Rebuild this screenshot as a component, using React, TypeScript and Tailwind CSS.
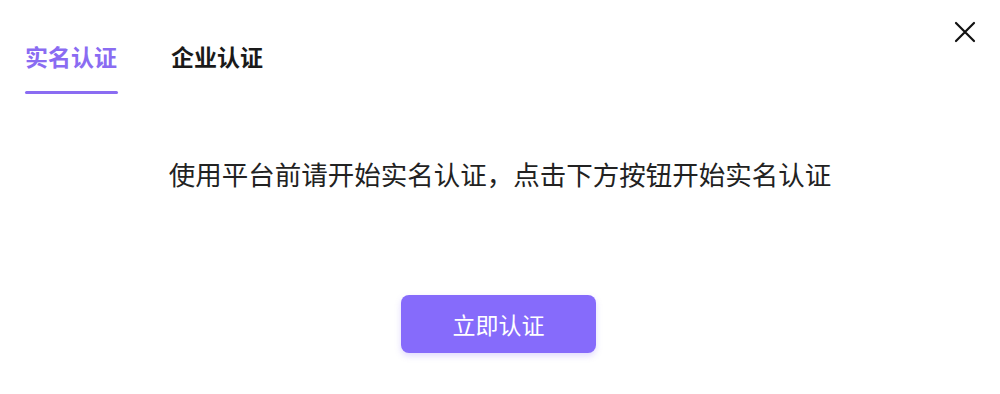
import { useState } from "react";

const font = { fontFamily: '"Noto Sans CJK SC", "Noto Sans", sans-serif' };

export default function App() {
  const [tab, setTab] = useState(0);
  const tabs = ["实名认证", "企业认证"];

  return (
    <div className="relative w-[1000px] h-[394px] bg-white" style={font}>
      <button className="absolute right-[24px] top-[21px] w-[22px] h-[22px] flex items-center justify-center">
        <svg width="22" height="22" viewBox="0 0 22 22" fill="none">
          <path d="M2 2L20 20M20 2L2 20" stroke="#111" strokeWidth="2.2" strokeLinecap="round" />
        </svg>
      </button>

      <div className="flex gap-[53px] pl-[25px] pt-[38px]">
        {tabs.map((t, i) => (
          <button key={t} onClick={() => setTab(i)} className="flex flex-col items-start">
            <span
              className={`text-[23px] leading-[36px] font-bold ${
                tab === i ? "text-[#8a6cf2]" : "text-[#1a1a1a]"
              }`}
            >
              {t}
            </span>
            <span
              className={`mt-[17px] h-[3px] w-[93px] rounded-full ${
                tab === i ? "bg-[#8a6cf2]" : "bg-transparent"
              }`}
            ></span>
          </button>
        ))}
      </div>

      <p className="mt-[62px] text-center text-[26.5px] leading-[36px] text-[#222]">
        使用平台前请开始实名认证，点击下方按钮开始实名认证
      </p>

      <div className="flex justify-center mt-[103px] pr-[3px]">
        <button className="w-[195px] h-[58px] rounded-[8px] bg-[#866bfb] text-white text-[23px] shadow-[0_3px_6px_rgba(134,107,251,0.25)]">
          立即认证
        </button>
      </div>
    </div>
  );
}
